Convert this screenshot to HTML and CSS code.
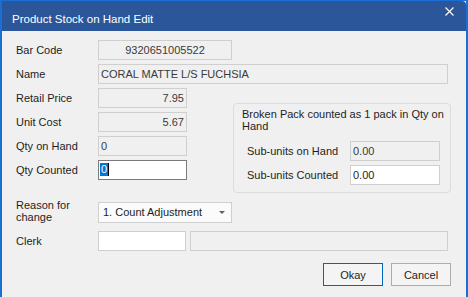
FILE: index.html
```html
<!DOCTYPE html>
<html lang="en">
<head>
    <meta charset="UTF-8">
    <title>Product Stock on Hand Edit</title>
    <link rel="stylesheet" href="styles.css">
</head>
<body>
    <div class="window">
        <div class="titlebar">
            <span class="title">Product Stock on Hand Edit</span>
            <span class="close">
                <svg width="9" height="9" viewBox="0 0 9 9"><path d="M0.5 0.5 L8.5 8.5 M8.5 0.5 L0.5 8.5" stroke="#fff" stroke-width="1.1" fill="none"/></svg>
            </span>
        </div>

        <div class="content">
            <div class="row">
                <label class="lbl">Bar Code</label>
                <div class="field ro mid center">9320651005522</div>
            </div>
            <div class="row">
                <label class="lbl">Name</label>
                <div class="field ro full">CORAL MATTE L/S FUCHSIA</div>
            </div>

            <div class="split">
                <div class="stack">
                    <div class="row">
                        <label class="lbl">Retail Price</label>
                        <div class="field ro small right">7.95</div>
                    </div>
                    <div class="row">
                        <label class="lbl">Unit Cost</label>
                        <div class="field ro small right">5.67</div>
                    </div>
                    <div class="row">
                        <label class="lbl">Qty on Hand</label>
                        <div class="field ro small">0</div>
                    </div>
                    <div class="row">
                        <label class="lbl">Qty Counted</label>
                        <div class="field small focus"><span class="sel">0</span></div>
                    </div>
                </div>

                <div class="group">
                    <div class="group-head">Broken Pack counted as 1 pack in Qty on<br>Hand</div>
                    <div class="row">
                        <label class="sublbl">Sub-units on Hand</label>
                        <div class="field ro sub">0.00</div>
                    </div>
                    <div class="row">
                        <label class="sublbl">Sub-units Counted</label>
                        <div class="field sub">0.00</div>
                    </div>
                </div>
            </div>

            <div class="row reason">
                <label class="lbl two">Reason for<br>change</label>
                <div class="combo">
                    <span>1. Count Adjustment</span>
                    <span class="arrow"></span>
                </div>
            </div>
            <div class="row clerk">
                <label class="lbl">Clerk</label>
                <div class="field small"></div>
                <div class="field ro clerk-name"></div>
            </div>

            <div class="actions">
                <button class="btn default">Okay</button>
                <button class="btn">Cancel</button>
            </div>
        </div>
    </div>
</body>
</html>
```

FILE: styles.css
```css
body {
    margin: 0;
    font-family: 'Liberation Sans', Arial, sans-serif;
    font-size: 11px;
    color: #1e1e1e;
    background-color: #ffffff;
}

.window {
    width: 464px;
    height: 296px;
    border: 2px solid #1a6fd6;
    border-top-width: 1px;
    background-color: #f0f0f0;
    display: flex;
    flex-direction: column;
}

.titlebar {
    height: 30px;
    box-sizing: border-box;
    padding: 6px 12px 0 10px;
    background-color: #2b579a;
    color: #ffffff;
    display: flex;
    justify-content: space-between;
    align-items: flex-start;
    border-top-right-radius: 4px;
}

.title {
    font-size: 11.5px;
    line-height: 24px;
}

.close {
    display: flex;
    margin-top: 0;
}

.content {
    padding: 9px 15px 0 14px;
    display: flex;
    flex-direction: column;
    gap: 4px;
}

.row {
    display: flex;
    align-items: center;
    height: 20px;
}

.lbl {
    width: 82px;
    flex-shrink: 0;
    line-height: 20px;
}

.field {
    height: 20px;
    box-sizing: border-box;
    border: 1px solid #cfcfcf;
    background-color: #ffffff;
    padding: 0 2px;
    line-height: 18px;
    white-space: nowrap;
    overflow: hidden;
}

.field.ro {
    background-color: #f0f0f0;
    color: #3a3a3a;
}

.center { text-align: center; }
.right { text-align: right; }

.mid { width: 134px; }
.full { width: 350px; }
.small { width: 89px; }
.sub { width: 90px; }

.field.focus {
    border-color: #7a7a7a;
    padding-left: 1px;
}

.sel {
    display: inline-block;
    background-color: #0078d7;
    color: #ffffff;
    line-height: 13px;
    padding: 0 1px;
    vertical-align: 1px;
    border-right: 1px solid #000;
}

.split {
    display: flex;
    align-items: flex-start;
    gap: 46px;
}

.stack {
    display: flex;
    flex-direction: column;
    gap: 4px;
}

.group {
    margin-top: 15px;
    width: 218px;
    height: 90px;
    box-sizing: border-box;
    border: 1px solid #dcdcdc;
    border-radius: 4px;
    padding: 4px 0 0 8px;
    display: flex;
    flex-direction: column;
    gap: 4px;
}

.group-head {
    line-height: 12px;
    margin-bottom: 5px;
}

.sublbl {
    width: 103px;
    padding-left: 5px;
    flex-shrink: 0;
}

.reason {
    height: auto;
    align-items: flex-start;
    margin-top: 2px;
}

.lbl.two {
    line-height: 12px;
}

.combo {
    margin-top: 3px;
    width: 134px;
    height: 21px;
    box-sizing: border-box;
    border: 1px solid #cfcfcf;
    background-color: #fbfbfb;
    padding: 0 6px 0 4px;
    display: flex;
    align-items: center;
    justify-content: space-between;
    line-height: 19px;
}

.arrow {
    width: 0;
    height: 0;
    border-left: 3px solid transparent;
    border-right: 3px solid transparent;
    border-top: 3px solid #606060;
}

.clerk {
    margin-top: 4px;
    gap: 0;
}

.clerk .small {
    width: 88px;
}

.clerk-name {
    margin-left: 4px;
    width: 258px;
}

.actions {
    margin-top: 8px;
    display: flex;
    justify-content: flex-end;
    gap: 8px;
}

.btn {
    width: 60px;
    height: 23px;
    box-sizing: border-box;
    border: 1px solid #adadad;
    background-color: #f4f4f4;
    font-family: 'Liberation Sans', Arial, sans-serif;
    font-size: 11px;
    color: #1e1e1e;
    padding: 0;
}

.btn.default {
    border-color: #0067c0;
}
```
